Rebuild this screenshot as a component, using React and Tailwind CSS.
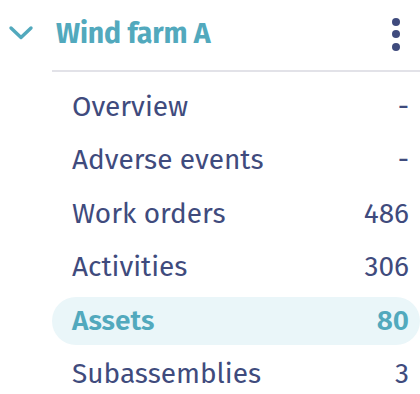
const items = [
  { label: 'Overview', count: '-' },
  { label: 'Adverse events', count: '-' },
  { label: 'Work orders', count: '486' },
  { label: 'Activities', count: '306' },
  { label: 'Assets', count: '80', active: true },
  { label: 'Subassemblies', count: '3' },
];

export default function App() {
  return (
    <div className="w-[420px] h-[394px] bg-white overflow-hidden" style={{ fontFamily: '"Fira Sans", "Noto Sans", sans-serif' }}>
      <div className="flex items-center h-[66px] pt-[2px]">
        <div className="w-[56px] flex justify-center pr-[14px] pb-[2px]">
          <svg width="26" height="18" viewBox="0 0 26 18" fill="none" stroke="#52a9bd" strokeWidth="3.4" strokeLinecap="round" strokeLinejoin="round">
            <path d="M3 4 L13 13.5 L23 4" />
          </svg>
        </div>
        <span className="flex-1 text-[28.5px] font-bold text-[#52a9bd] tracking-[-0.2px]">Wind farm A</span>
        <div className="flex flex-col gap-[4.5px] items-center w-[20px] mr-[14px]">
          <span className="w-[8px] h-[8px] rounded-full bg-[#3f4b7d]" />
          <span className="w-[8px] h-[8px] rounded-full bg-[#3f4b7d]" />
          <span className="w-[8px] h-[8px] rounded-full bg-[#3f4b7d]" />
        </div>
      </div>
      <div className="ml-[52px] h-[2px] bg-[#e2e2e8] mt-[4px]" />
      <div className="ml-[52px] mt-[11px] flex flex-col gap-[5.4px]">
        {items.map((it) => (
          <div
            key={it.label}
            className={`flex items-center justify-between h-[48px] pl-[20px] pr-[11px] rounded-full text-[28px] ${it.active ? 'bg-[#eaf6f9] text-[#52a9bd] font-semibold' : 'text-[#3f4b7d] font-normal'}`}
          >
            <span>{it.label}</span>
            <span>{it.count}</span>
          </div>
        ))}
      </div>
    </div>
  );
}
